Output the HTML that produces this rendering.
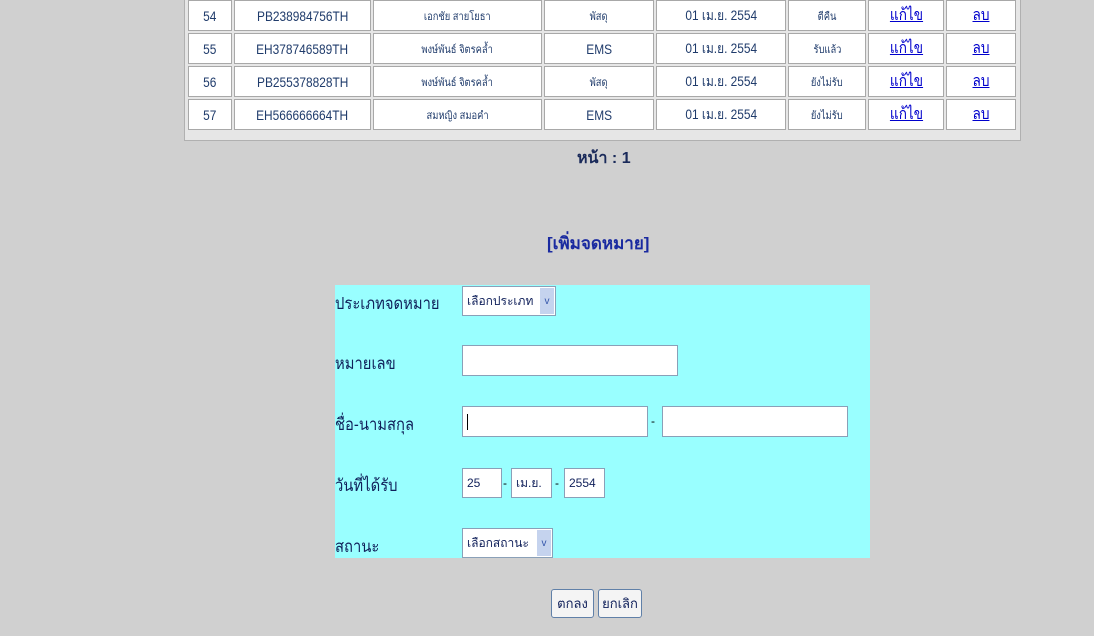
<!DOCTYPE html>
<html><head><meta charset="utf-8"><style>
body{margin:0;width:1094px;height:636px;background:#d0d0d0;position:relative;overflow:hidden;font-family:"Liberation Sans","Noto Sans CJK SC",sans-serif}
.a{position:absolute}
.c{position:absolute;background:#fff;border:1px solid #a8a8a8;box-sizing:border-box;display:flex;align-items:center;justify-content:center;color:#1f3b6b;font-size:14px}
.c span{display:inline-block;transform:scaleX(0.85)}
.c.s{font-size:11px}
.c a{color:#0000cc;text-decoration:underline;font-size:16px;display:inline-block;transform:scaleX(0.85)}
.lbl{position:absolute;left:335px;font-size:17px;color:#10205a;transform:scaleX(0.87);transform-origin:left}
.in{position:absolute;background:#fff;border:1px solid #8aa0b8;box-sizing:border-box;font-size:12px;color:#10205a;display:flex;align-items:center;padding-left:4px}
.sel .ar{position:absolute;right:1px;top:1px;bottom:1px;width:14px;background:#c5d3ee;color:#3355aa;font-size:10px;display:flex;align-items:center;justify-content:center}
.btn{position:absolute;background:#f4f4f4;border:1px solid #6080a8;border-radius:3px;box-sizing:border-box;font-size:13px;display:flex;align-items:center;justify-content:center;color:#10205a}
</style></head><body>
<div class="a" style="left:184px;top:0;width:837px;height:141px;background:#e6e6e6;border:1px solid #b0b0b0;border-top:none;box-sizing:border-box"></div>
<div id="t"></div>
<script>
var cols=[[187,233],[233,372],[372,543],[543,655],[655,787],[787,867],[867,945],[945,1017]];
var rows=[[0,31],[33,64],[66,97],[99,130]];
var d=[["54","PB238984756TH","เอกชัย  สายโยธา","พัสดุ","01 เม.ย. 2554","ตีคืน"],
["55","EH378746589TH","พงษ์พันธ์  จิตรคล้ำ","EMS","01 เม.ย. 2554","รับแล้ว"],
["56","PB255378828TH","พงษ์พันธ์  จิตรคล้ำ","พัสดุ","01 เม.ย. 2554","ยังไม่รับ"],
["57","EH566666664TH","สมหญิง  สมอคำ","EMS","01 เม.ย. 2554","ยังไม่รับ"]];
var h="";
rows.forEach(function(r,i){cols.forEach(function(c,j){
var txt=j<6?'<span>'+d[i][j]+'</span>':(j==6?'<a>แก้ไข</a>':'<a>ลบ</a>');
var cls=(j==2||(j==3&&d[i][3]!="EMS")||j==5)?"c s":"c";
h+='<div class="'+cls+'" style="left:'+(c[0]+1)+'px;top:'+r[0]+'px;width:'+(c[1]-c[0]-2)+'px;height:'+(r[1]-r[0])+'px">'+txt+'</div>';});});
document.getElementById("t").innerHTML=h;
</script>
<div class="a" style="left:577px;top:146px;font-size:16px;font-weight:bold;color:#1a2a5a">หน้า : 1</div>
<div class="a" style="left:547px;top:230px;font-size:17px;font-weight:bold;color:#1a2aa0">[เพิ่มจดหมาย]</div>
<div class="a" style="left:335px;top:285px;width:535px;height:273px;background:#99ffff"></div>
<div class="lbl" style="top:290px">ประเภทจดหมาย</div>
<div class="lbl" style="top:350px">หมายเลข</div>
<div class="lbl" style="top:411px">ชื่อ-นามสกุล</div>
<div class="lbl" style="top:472px">วันที่ได้รับ</div>
<div class="lbl" style="top:533px">สถานะ</div>
<div class="in sel" style="left:462px;top:286px;width:94px;height:30px">เลือกประเภท<span class="ar">v</span></div>
<div class="in" style="left:462px;top:345px;width:216px;height:31px"></div>
<div class="in" style="left:462px;top:406px;width:186px;height:31px"><span style="border-left:1px solid #000;height:16px"></span></div>
<div class="a" style="left:651px;top:414px;font-size:12px">-</div>
<div class="in" style="left:662px;top:406px;width:186px;height:31px"></div>
<div class="in" style="left:462px;top:468px;width:40px;height:30px">25</div>
<div class="a" style="left:503px;top:476px;font-size:12px">-</div>
<div class="in" style="left:511px;top:468px;width:41px;height:30px">เม.ย.</div>
<div class="a" style="left:555px;top:476px;font-size:12px">-</div>
<div class="in" style="left:564px;top:468px;width:41px;height:30px">2554</div>
<div class="in sel" style="left:462px;top:528px;width:91px;height:30px">เลือกสถานะ<span class="ar">v</span></div>
<div class="btn" style="left:551px;top:589px;width:43px;height:29px">ตกลง</div>
<div class="btn" style="left:598px;top:589px;width:44px;height:29px">ยกเลิก</div>
</body></html>
